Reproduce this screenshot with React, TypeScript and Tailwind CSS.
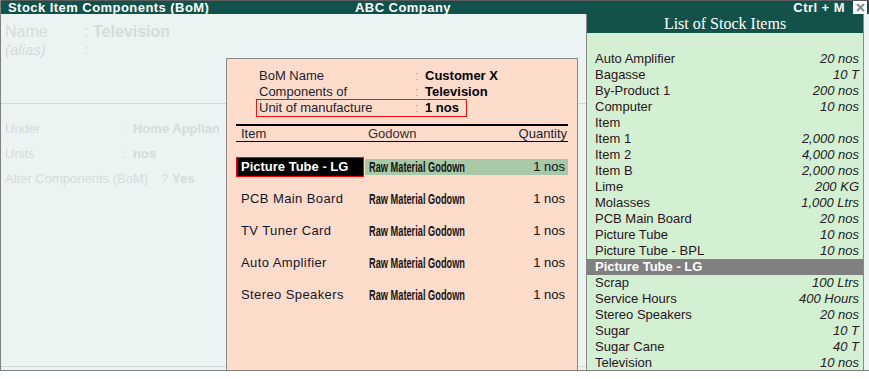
import React from "react";

const stockItems: [string, string][] = [
  ["Auto Amplifier", "20 nos"],
  ["Bagasse", "10 T"],
  ["By-Product 1", "200 nos"],
  ["Computer", "10 nos"],
  ["Item", ""],
  ["Item 1", "2,000 nos"],
  ["Item 2", "4,000 nos"],
  ["Item B", "2,000 nos"],
  ["Lime", "200 KG"],
  ["Molasses", "1,000 Ltrs"],
  ["PCB Main Board", "20 nos"],
  ["Picture Tube", "10 nos"],
  ["Picture Tube - BPL", "10 nos"],
  ["Picture Tube - LG", ""],
  ["Scrap", "100 Ltrs"],
  ["Service Hours", "400 Hours"],
  ["Stereo Speakers", "20 nos"],
  ["Sugar", "10 T"],
  ["Sugar Cane", "40 T"],
  ["Television", "10 nos"],
];

const components = ["PCB Main Board", "TV Tuner Card", "Auto Amplifier", "Stereo Speakers"];

function Godown() {
  return (
    <span className="inline-block origin-left scale-x-[0.66] whitespace-nowrap text-[14px] leading-[16px] font-bold text-[#151515]">
      Raw Material Godown
    </span>
  );
}

export default function App() {
  return (
    <div className="w-[869px] h-[379px] bg-white overflow-hidden font-['Liberation_Sans',Arial,sans-serif]">
      <div className="h-[371px] flex flex-col border-l border-b border-[#808080] bg-[#ebf4f2]">
        {/* title bar */}
        <div className="h-[14px] border-t border-[#5c5c5c] bg-[#13524a] flex items-center text-white font-bold text-[13px] leading-[13px] tracking-[0.45px]">
          <div className="w-[300px] pl-[7px]">Stock Item Components (BoM)</div>
          <div className="flex-1 pl-[54px]">ABC Company</div>
          <div className="pr-[8px]">Ctrl + M</div>
          <div className="w-[14px] h-[13px] bg-white flex items-center justify-center mr-[2px]">
            <svg width="9" height="9" viewBox="0 0 9 9">
              <path d="M1 1 L8 8 M8 1 L1 8" stroke="#8a8a8a" strokeWidth="2" />
            </svg>
          </div>
        </div>

        <div className="flex-1 flex min-h-0">
          {/* left form */}
          <div className="relative flex-1 flex flex-col text-[#d6dbdb]">
            <div className="h-[89px] pt-[8px] pl-[4px]">
              <div className="flex text-[16px] leading-[19px]">
                <span className="w-[79px]">Name</span>
                <span className="w-[9px]">:</span>
                <span className="font-bold">Television</span>
              </div>
              <div className="flex text-[15px] leading-[18px] italic">
                <span className="w-[79px]">(alias)</span>
                <span>:</span>
              </div>
            </div>
            <div className="h-px bg-[#d3d9d9]" />
            <div className="flex-1 pt-[17px] pl-[4px] text-[13px] leading-[16px] flex flex-col gap-[9px]">
              <div className="flex">
                <span className="w-[118px]">Under</span>
                <span className="w-[10px]">:</span>
                <span className="font-bold w-[86px] overflow-hidden whitespace-nowrap">Home Applian</span>
              </div>
              <div className="flex">
                <span className="w-[118px]">Units</span>
                <span className="w-[10px]">:</span>
                <span className="font-bold">nos</span>
              </div>
              <div className="flex">
                <span className="w-[156px]">Alter Components (BoM)</span>
                <span className="w-[11px]">?</span>
                <span className="font-bold">Yes</span>
              </div>
            </div>
            <div className="h-px bg-[#d3d9d9] mb-[3px]" />

            {/* BoM popup */}
            <div className="absolute left-[225px] top-[44px] bottom-0 w-[352px] border-l border-t border-r border-[#8a8a8a] bg-[#fddccc] text-[#1c1c2e]">
              <div className="pt-[9px] pl-[29px] text-[13px] leading-[16px]">
                <div className="flex pl-[3px]">
                  <span className="w-[156px]">BoM Name</span>
                  <span className="w-[10px] text-[#b5a48f]">:</span>
                  <span className="font-bold text-black">Customer X</span>
                </div>
                <div className="flex pl-[3px]">
                  <span className="w-[156px]">Components of</span>
                  <span className="w-[10px] text-[#b5a48f]">:</span>
                  <span className="font-bold text-black">Television</span>
                </div>
                <div className="-mt-px flex w-[211px] h-[18px] items-center border border-[#e11] pl-[2px]">
                  <span className="w-[156px]">Unit of manufacture</span>
                  <span className="w-[10px] text-[#b5a48f]">:</span>
                  <span className="font-bold text-black">1 nos</span>
                </div>
              </div>

              <div className="mx-[9px] mt-[7px]">
                <div className="h-[2px] bg-black" />
                <div className="flex h-[15px] items-center text-[13px] leading-[15px] pl-[5px] pr-[1px]">
                  <span className="w-[127px]">Item</span>
                  <span className="flex-1 text-[#3a2a2a]">Godown</span>
                  <span>Quantity</span>
                </div>
                <div className="h-px bg-black" />

                <div className="mt-[15px] flex items-center h-[20px]">
                  <div className="w-[128px] h-[20px] border border-[#f00] bg-black text-white font-bold text-[13px] leading-[18px] pl-[4px] whitespace-nowrap">
                    Picture Tube - LG
                  </div>
                  <div className="flex-1 ml-px h-[16px] bg-[#a7c9a7] flex items-center pl-[4px] pr-[3px]">
                    <div className="flex-1 flex items-center">
                      <Godown />
                    </div>
                    <span className="text-[13px] text-[#111]">1 nos</span>
                  </div>
                </div>

                {components.map((c) => (
                  <div key={c} className="mt-[12px] flex items-center h-[20px] text-[13px]">
                    <span className="w-[129px] pl-[5px] tracking-[0.4px] whitespace-nowrap text-[#141428]">{c}</span>
                    <div className="flex-1 pl-[4px] flex items-center">
                      <Godown />
                    </div>
                    <span className="pr-[3px] text-[#111]">1 nos</span>
                  </div>
                ))}
              </div>
            </div>
          </div>

          {/* right list panel */}
          <div className="w-[278px] mr-[5px] flex flex-col border-l border-r border-[#8a8a8a] bg-[#d3f0d3]">
            <div className="h-[19px] bg-[#13524a] text-white text-center font-['Liberation_Serif',serif] text-[16px] leading-[19px]">
              List of Stock Items
            </div>
            <div className="pt-[18px] text-[13px] leading-[16px]">
              {stockItems.map(([name, qty]) =>
                name === "Picture Tube - LG" ? (
                  <div key={name} className="h-[16px] bg-[#808080] text-white font-bold pl-[8px]">
                    {name}
                  </div>
                ) : (
                  <div key={name} className="h-[16px] flex justify-between pl-[8px] pr-[4px] text-[#2a1420]">
                    <span>{name}</span>
                    <span className="italic text-[#222]">{qty}</span>
                  </div>
                )
              )}
            </div>
          </div>
        </div>
      </div>
    </div>
  );
}
